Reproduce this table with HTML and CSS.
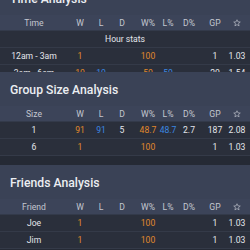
FILE: index.html
```html
<!DOCTYPE html>
<html>
<head>
<meta charset="utf-8">
<link rel="stylesheet" href="styles.css">
</head>
<body>
<div class="page">
  <section class="card card-time">
    <h2 class="card-title">Time Analysis</h2>
    <div class="table table-clip">
      <div class="row head">
        <div class="c">Time</div><div class="c">W</div><div class="c">L</div><div class="c">D</div><div class="c">W%</div><div class="c">L%</div><div class="c">D%</div><div class="c">GP</div><div class="c"><svg class="star" viewBox="0 0 10 10"><path d="M5 .9 6.2 3.6 9.1 3.8 6.9 5.7 7.6 8.6 5 7 2.4 8.6 3.1 5.7.9 3.8 3.8 3.6Z" fill="none" stroke="currentColor" stroke-width=".8" stroke-linejoin="round"/></svg></div>
      </div>
      <div class="row sub"><span>Hour stats</span></div>
      <div class="row">
        <div class="c">12am - 3am</div><div class="c win">1</div><div class="c loss"></div><div class="c"></div><div class="c win">100</div><div class="c loss"></div><div class="c"></div><div class="c">1</div><div class="c">1.03</div>
      </div>
      <div class="row">
        <div class="c">3am - 6am</div><div class="c win">10</div><div class="c loss">10</div><div class="c"></div><div class="c win">50</div><div class="c loss">50</div><div class="c"></div><div class="c">20</div><div class="c">1.54</div>
      </div>
    </div>
  </section>

  <section class="card">
    <h2 class="card-title">Group Size Analysis</h2>
    <div class="table">
      <div class="row head">
        <div class="c">Size</div><div class="c">W</div><div class="c">L</div><div class="c">D</div><div class="c">W%</div><div class="c">L%</div><div class="c">D%</div><div class="c">GP</div><div class="c"><svg class="star" viewBox="0 0 10 10"><path d="M5 .9 6.2 3.6 9.1 3.8 6.9 5.7 7.6 8.6 5 7 2.4 8.6 3.1 5.7.9 3.8 3.8 3.6Z" fill="none" stroke="currentColor" stroke-width=".8" stroke-linejoin="round"/></svg></div>
      </div>
      <div class="row">
        <div class="c">1</div><div class="c win">91</div><div class="c loss">91</div><div class="c">5</div><div class="c win">48.7</div><div class="c loss">48.7</div><div class="c">2.7</div><div class="c">187</div><div class="c">2.08</div>
      </div>
      <div class="row">
        <div class="c">6</div><div class="c win">1</div><div class="c loss"></div><div class="c"></div><div class="c win">100</div><div class="c loss"></div><div class="c"></div><div class="c">1</div><div class="c">1.03</div>
      </div>
    </div>
  </section>

  <section class="card">
    <h2 class="card-title">Friends Analysis</h2>
    <div class="table">
      <div class="row head">
        <div class="c">Friend</div><div class="c">W</div><div class="c">L</div><div class="c">D</div><div class="c">W%</div><div class="c">L%</div><div class="c">D%</div><div class="c">GP</div><div class="c"><svg class="star" viewBox="0 0 10 10"><path d="M5 .9 6.2 3.6 9.1 3.8 6.9 5.7 7.6 8.6 5 7 2.4 8.6 3.1 5.7.9 3.8 3.8 3.6Z" fill="none" stroke="currentColor" stroke-width=".8" stroke-linejoin="round"/></svg></div>
      </div>
      <div class="row">
        <div class="c">Joe</div><div class="c win">1</div><div class="c loss"></div><div class="c"></div><div class="c win">100</div><div class="c loss"></div><div class="c"></div><div class="c">1</div><div class="c">1.03</div>
      </div>
      <div class="row">
        <div class="c">Jim</div><div class="c win">1</div><div class="c loss"></div><div class="c"></div><div class="c win">100</div><div class="c loss"></div><div class="c"></div><div class="c">1</div><div class="c">1.03</div>
      </div>
    </div>
  </section>
</div>
</body>
</html>
```
FILE: styles.css
```css
html, body {
  margin: 0;
  padding: 0;
  background: #252a35;
  overflow: hidden;
}
body {
  width: 250px;
  height: 250px;
  font-family: Roboto, "Noto Sans", sans-serif;
  color: #e4e6eb;
}
.page {
  display: flex;
  flex-direction: column;
  gap: 9px;
  margin-top: -19px;
}
.card-time {
  margin-bottom: -9px;
}
.card-title {
  margin: 0;
  height: 34px;
  display: flex;
  align-items: center;
  padding: 2px 0 0 10px;
  box-sizing: border-box;
  background: #3a4256;
  color: #eceef2;
  font-size: 12.2px;
  font-weight: 500;
}
.table-clip {
  height: 57px;
  overflow: hidden;
}
.row {
  display: grid;
  grid-template-columns: 68px 24px 18px 24px 28px 12px 30px 22px 22px;
  height: 17px;
  box-sizing: border-box;
  border-bottom: 1px solid #343a48;
  background: #2a2f3b;
  font-size: 8.6px;
  align-items: center;
}
.row.head {
  height: 16px;
  background: #3c4459;
  border-bottom: 1px solid #333a4a;
  color: #c3c7d0;
}
.row.sub {
  display: flex;
  justify-content: center;
  color: #e4e6eb;
}
.c {
  display: flex;
  justify-content: center;
  white-space: nowrap;
  min-width: 0;
}
.win { color: #e0892b; }
.loss { color: #3b87e2; }
.star {
  width: 8px;
  height: 8px;
  display: block;
}
```
